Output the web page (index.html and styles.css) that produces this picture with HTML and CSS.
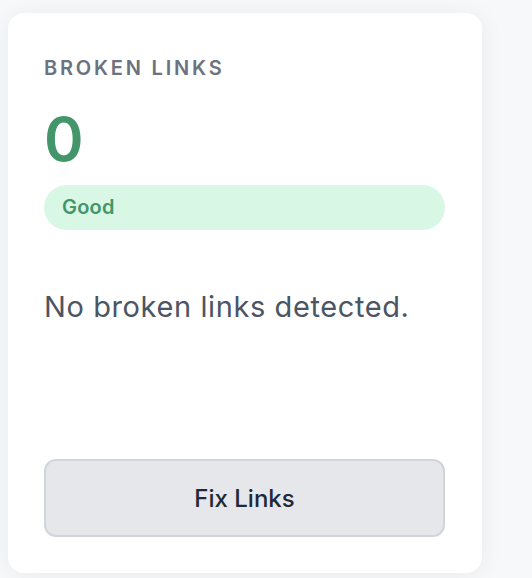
FILE: index.html
```html
<!DOCTYPE html>
<html lang="en">
<head>
<meta charset="utf-8">
<title>Broken Links</title>
<link rel="stylesheet" href="styles.css">
</head>
<body>
<section class="card">
  <h2 class="card-title">BROKEN LINKS</h2>
  <div class="metric">0</div>
  <div class="status-pill">Good</div>
  <p class="description">No broken links detected.</p>
  <button class="action-btn" type="button">Fix Links</button>
</section>
</body>
</html>
```

FILE: styles.css
```css
html, body {
  margin: 0;
  padding: 0;
}
body {
  background: #f7f8fa;
  font-family: Inter, "Noto Sans", "Liberation Sans", sans-serif;
  padding: 13px 8px;
}
.card {
  box-sizing: border-box;
  width: 474px;
  height: 560px;
  background: #ffffff;
  border-radius: 16px;
  box-shadow: 0 2px 24px rgba(17, 24, 39, 0.06);
  padding: 41px 37px 36px 36px;
  display: flex;
  flex-direction: column;
}
.card-title {
  margin: 0;
  font-size: 20px;
  line-height: 28px;
  font-weight: 600;
  letter-spacing: 2.8px;
  color: #6b7280;
}
.metric {
  margin-top: 27px;
  font-size: 60px;
  line-height: 60px;
  font-weight: 600;
  color: #43956a;
}
.status-pill {
  margin-top: 16px;
  background: #d9f7e5;
  color: #43956a;
  border-radius: 999px;
  padding: 10px 18px;
  font-size: 20px;
  line-height: 25px;
  font-weight: 600;
  letter-spacing: 0.2px;
}
.description {
  margin: 57px 0 0;
  font-size: 29px;
  line-height: 40px;
  font-weight: 400;
  letter-spacing: 0.6px;
  color: #4b5563;
}
.action-btn {
  margin-top: auto;
  height: 78px;
  width: 100%;
  background: #e5e7eb;
  border: 2px solid #d1d5db;
  border-radius: 12px;
  font-family: inherit;
  font-size: 24px;
  font-weight: 500;
  color: #1f2937;
  cursor: pointer;
}
```
